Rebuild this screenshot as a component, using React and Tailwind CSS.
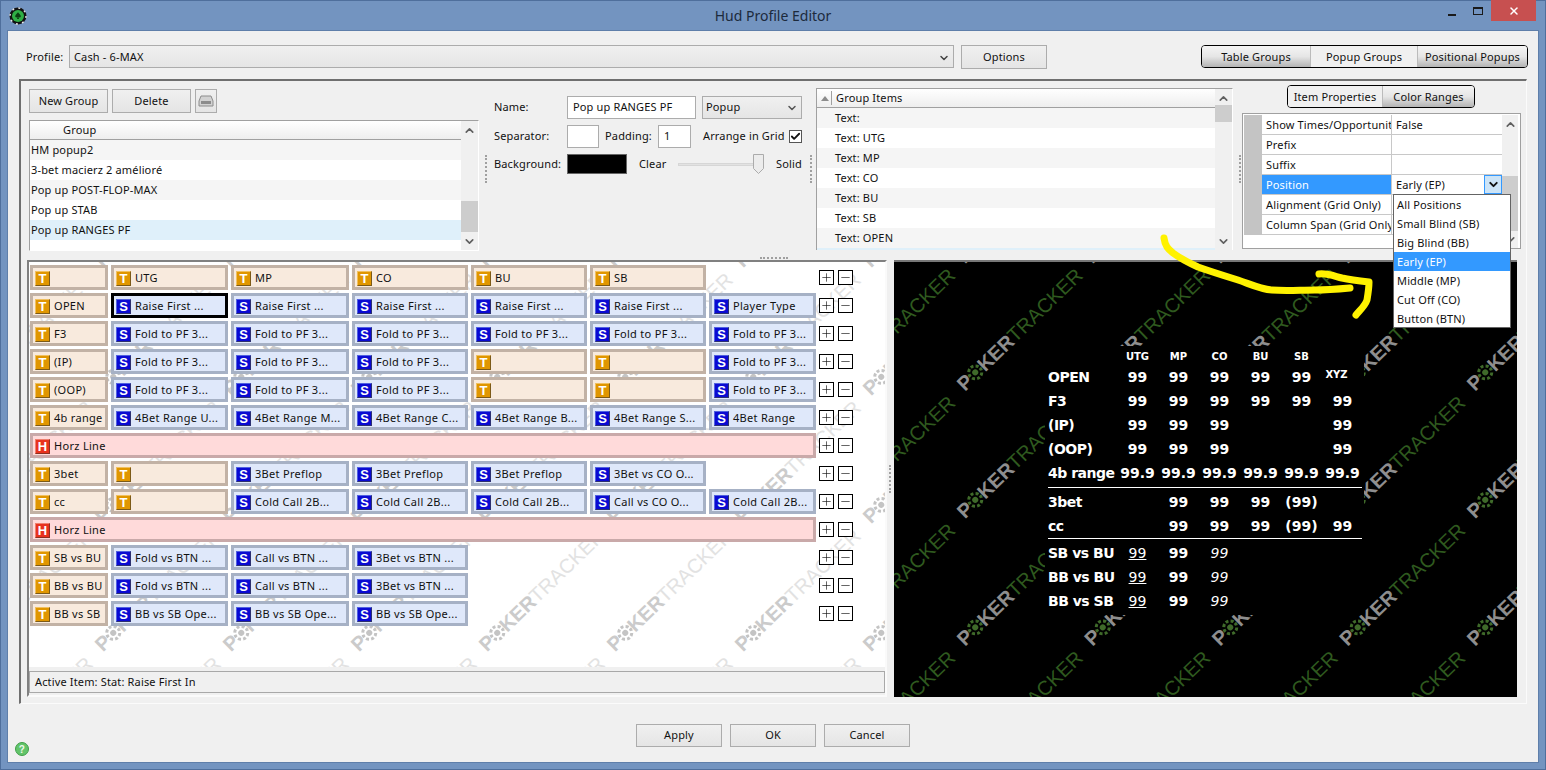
import React from 'react';
import { ChevronUp, ChevronDown, Check, Plus, Minus, X } from 'lucide-react';

const colWidths = ['w-[78px]', 'w-[117px]', 'w-[118px]', 'w-[116px]', 'w-[116px]', 'w-[116px]', 'w-[107px]'];

const fold = 'S:Fold to PF 3...';
const rows = [
  ['T:', 'T:UTG', 'T:MP', 'T:CO', 'T:BU', 'T:SB', null],
  ['T:OPEN', 'A:Raise First ...', 'S:Raise First ...', 'S:Raise First ...', 'S:Raise First ...', 'S:Raise First ...', 'S:Player Type'],
  ['T:F3', fold, fold, fold, fold, fold, fold],
  ['T:(IP)', fold, fold, fold, 'T:', 'T:', fold],
  ['T:(OOP)', fold, fold, fold, 'T:', 'T:', fold],
  ['T:4b range', 'S:4Bet Range U...', 'S:4Bet Range M...', 'S:4Bet Range C...', 'S:4Bet Range B...', 'S:4Bet Range S...', 'S:4Bet Range'],
  'line',
  ['T:3bet', 'T:', 'S:3Bet Preflop', 'S:3Bet Preflop', 'S:3Bet Preflop', 'S:3Bet vs CO O...', null],
  ['T:cc', 'T:', 'S:Cold Call 2B...', 'S:Cold Call 2B...', 'S:Cold Call 2B...', 'S:Call vs CO O...', 'S:Cold Call 2B...'],
  'line',
  ['T:SB vs BU', 'S:Fold vs BTN ...', 'S:Call vs BTN ...', 'S:3Bet vs BTN ...', null, null, null],
  ['T:BB vs BU', 'S:Fold vs BTN ...', 'S:Call vs BTN ...', 'S:3Bet vs BTN ...', null, null, null],
  ['T:BB vs SB', 'S:BB vs SB Ope...', 'S:BB vs SB Ope...', 'S:BB vs SB Ope...', null, null, null],
];

const hudRows = [
  ['OPEN', '99', '99', '99', '99', '99', 'XYZ'],
  ['F3', '99', '99', '99', '99', '99', '99'],
  ['(IP)', '99', '99', '99', '', '', '99'],
  ['(OOP)', '99', '99', '99', '', '', '99'],
  ['4b range', '99.9', '99.9', '99.9', '99.9', '99.9', '99.9'],
];

const groups = ['HM popup2', '3-bet macierz 2 amélioré', 'Pop up POST-FLOP-MAX', 'Pop up STAB', 'Pop up RANGES PF'];
const groupItems = ['Text:', 'Text: UTG', 'Text: MP', 'Text: CO', 'Text: BU', 'Text: SB', 'Text: OPEN'];
const positions = ['All Positions', 'Small Blind (SB)', 'Big Blind (BB)', 'Early (EP)', 'Middle (MP)', 'Cut Off (CO)', 'Button (BTN)'];
const props = [
  ['Show Times/Opportunities', 'False'],
  ['Prefix', ''],
  ['Suffix', ''],
  ['Position', 'Early (EP)'],
  ['Alignment (Grid Only)', ''],
  ['Column Span (Grid Only)', ''],
];

const btn = 'flex items-center justify-center border border-[#acacac] bg-gradient-to-b from-[#f0f0f0] to-[#e5e5e5]';
const darkTab = 'flex items-center justify-center pt-[2px] bg-gradient-to-b from-[#f4f4f4] via-[#e6e6e6] to-[#b4b4b4]';
const hudRow = 'grid grid-cols-[69px_repeat(6,41px)] h-[24px] pt-[2px] items-center text-center';

function Watermark({ startX, startY, pitch, nx, ny, poker, tracker, chip }) {
  const items = [];
  for (let j = 0; j < ny; j++) {
    for (let i = 0; i < nx; i++) {
      items.push(
        <g key={`${i}-${j}`} transform={`translate(${startX + i * pitch} ${startY + j * pitch}) rotate(-44)`}>
          <text x="0" y="0" fontSize="20" fontWeight="700" fill={poker}>P</text>
          <circle cx="21" cy="-7" r="6.5" fill="none" stroke={chip} strokeWidth="3" strokeDasharray="3 2" />
          <circle cx="21" cy="-7" r="3" fill={chip} />
          <text x="28" y="0" fontSize="20" fontWeight="700" fill={poker}>KER</text>
          <text x="70" y="0" fontSize="20" fill={tracker}>TRACKER</text>
        </g>
      );
    }
  }
  return (
    <svg className="absolute inset-0 w-full h-full tracking-normal font-[Liberation_Sans,sans-serif]">
      {items}
    </svg>
  );
}

function ItemIcon({ kind }) {
  const colors = {
    T: 'bg-[#e09600] border-t-[#f0c060] border-l-[#f0c060] border-r-[#7c5a18] border-b-[#7c5a18]',
    S: 'bg-[#0a0ad2] border-t-[#5060e0] border-l-[#5060e0] border-r-[#2c3070] border-b-[#2c3070]',
    H: 'bg-[#e8321e] border-t-[#f08070] border-l-[#f08070] border-r-[#8c3020] border-b-[#8c3020]',
  };
  return (
    <span className={`w-[15px] h-[15px] shrink-0 border flex items-center justify-center text-white font-bold text-[13px] leading-none tracking-normal font-[Liberation_Sans,sans-serif] ${colors[kind]}`}>
      {kind}
    </span>
  );
}

function StatCell({ spec, width }) {
  if (!spec) return <div className={`${width} shrink-0`} />;
  const kind = spec[0];
  const label = spec.slice(2);
  const style = {
    T: 'bg-[#f8eadd] border-[#c2b2a5]',
    S: 'bg-[#dfe8fa] border-[#a6b1c5]',
    A: 'bg-[#dfe8fa] border-black',
  };
  return (
    <div className={`${width} shrink-0 h-[25px] border-[3px] pl-[2px] pt-[2px] flex items-center gap-[4px] whitespace-nowrap overflow-hidden tracking-[0.3px] ${style[kind]}`}>
      <ItemIcon kind={kind === 'A' ? 'S' : kind} />
      <span>{label}</span>
    </div>
  );
}

function RowControls() {
  return (
    <div className="flex items-center gap-[4px]">
      <span className="w-[15px] h-[15px] border border-black bg-white flex items-center justify-center"><Plus size={13} strokeWidth={1.2} /></span>
      <span className="w-[15px] h-[15px] border border-black bg-white flex items-center justify-center"><Minus size={13} strokeWidth={1.2} /></span>
    </div>
  );
}

function Scrollbar({ thumb, width = 'w-[17px]' }) {
  return (
    <div className={`${width} shrink-0 bg-[#f0f0f0] flex flex-col items-center`}>
      <ChevronUp size={13} strokeWidth={3} className="text-[#606060] mt-[3px] shrink-0" />
      <div className="flex-1 w-full">
        <div className={`bg-[#cdcdcd] w-full ${thumb}`} />
      </div>
      <ChevronDown size={13} strokeWidth={3} className="text-[#606060] mb-[2px] shrink-0" />
    </div>
  );
}

function VGrip({ className }) {
  return <div className={`w-[2px] h-[28px] shrink-0 border-l-2 border-dotted border-[#a0a0a0] ${className}`} />;
}

function Chip() {
  return (
    <svg width="18" height="18" viewBox="0 0 18 18">
      <circle cx="9" cy="9" r="8.5" fill="#111" />
      <circle cx="9" cy="9" r="8" fill="none" stroke="#e8e8e8" strokeWidth="1.4" strokeDasharray="2 4.3" />
      <circle cx="9" cy="9" r="6" fill="#2fae45" />
      <path d="M9 5.2c1 1.5 2.8 2.5 2.8 4 0 1.2-1.5 1.6-2.3.7l.5 2h-2l.5-2c-.8.9-2.3.5-2.3-.7 0-1.5 1.8-2.5 2.8-4z" fill="#0b3d12" />
    </svg>
  );
}

function Hud() {
  return (
    <div className="relative ml-[151px] mt-[84px] w-[319px] h-[269px] bg-black text-white font-bold text-[14px] tracking-normal pl-[3px] font-[DejaVu_Sans,sans-serif]">
      <div className="grid grid-cols-[69px_repeat(6,41px)] h-[18px] pt-[2px] items-center text-[10px] text-center">
        <span />
        <span>UTG</span><span>MP</span><span>CO</span><span>BU</span><span>SB</span><span />
      </div>
      {hudRows.map((row) => (
        <div key={row[0]} className={hudRow}>
          <span className="text-left tracking-[-0.5px] whitespace-nowrap">{row[0]}</span>
          {row.slice(1).map((v, i) => (
            <span key={i} className={v === 'XYZ' ? 'text-[10px] -mt-[6px] -translate-x-[6px]' : ''}>{v}</span>
          ))}
        </div>
      ))}
      <div className="h-px bg-white w-[314px] mt-[3px] mb-px" />
      {[
        ['3bet', '', '99', '99', '99', '(99)', ''],
        ['cc', '', '99', '99', '99', '(99)', '99'],
      ].map((row) => (
        <div key={row[0]} className={hudRow}>
          <span className="text-left tracking-[-0.5px]">{row[0]}</span>
          {row.slice(1).map((v, i) => <span key={i}>{v}</span>)}
        </div>
      ))}
      <div className="h-px bg-white w-[314px] mt-px mb-px" />
      {['SB vs BU', 'BB vs BU', 'BB vs SB'].map((label) => (
        <div key={label} className={hudRow}>
          <span className="text-left tracking-[-0.5px] whitespace-nowrap">{label}</span>
          <span className="font-normal underline">99</span>
          <span>99</span>
          <span className="font-normal italic">99</span>
        </div>
      ))}
    </div>
  );
}

export default function App() {
  return (
    <div className="relative w-[1546px] h-[770px] overflow-hidden bg-[#7394c0] shadow-[inset_0_0_0_1px_#4f6f9c] text-[11px] tracking-[0.15px] text-[#111] font-[Noto_Sans,sans-serif]">
      {/* title bar */}
      <div className="relative h-[31px] flex items-center justify-center text-[14px] tracking-normal text-[#1c2a3c]">
        <div className="absolute left-[9px] top-[7px]"><Chip /></div>
        Hud Profile Editor
        <div className="absolute right-[10px] top-0 flex items-start">
          <div className="w-[26px] h-[21px] flex items-end justify-center pb-[5px]"><span className="w-[8px] h-[2px] bg-[#1a1a1a]" /></div>
          <div className="w-[26px] h-[21px] flex items-center justify-center"><span className="w-[10px] h-[8px] border border-t-2 border-[#1a1a1a]" /></div>
          <div className="w-[45px] h-[21px] bg-[#c75050] flex items-center justify-center"><X size={12} strokeWidth={3} className="text-white" /></div>
        </div>
      </div>

      {/* window body */}
      <div className="mx-[8px] h-[731px] bg-[#f0f0f0] shadow-[0_0_0_1px_#5f7faa] flex flex-col">
        {/* profile row */}
        <div className="h-[48px] shrink-0 pt-[14px] pl-[18px] pr-[10px] flex items-start">
          <span className="w-[43px] h-[23px] pt-[2px] flex items-center">Profile:</span>
          <div className={`${btn} w-[885px] h-[23px] !justify-between pl-[4px] pr-[3px] pt-[2px]`}>
            <span>Cash - 6-MAX</span>
            <ChevronDown size={12} strokeWidth={3} className="text-[#444]" />
          </div>
          <div className={`${btn} w-[86px] h-[24px] ml-[7px]`}>Options</div>
          <div className="ml-[154px] w-[327px] h-[23px] flex border border-black rounded-[4px] overflow-hidden">
            <div className={`${darkTab} w-[108px]`}>Table Groups</div>
            <div className="w-[108px] flex items-center justify-center pt-[2px] bg-[#f0f0f0] border-x border-[#bbb]">Popup Groups</div>
            <div className={`${darkTab} flex-1 whitespace-nowrap`}>Positional Popups</div>
          </div>
        </div>

        {/* main panel */}
        <div className="mx-[11px] h-[625px] shrink-0 border-t-2 border-l-2 border-[#6f6f6f] border-r border-b border-r-[#fbfbfb] border-b-[#fbfbfb] flex flex-col">
          {/* top section */}
          <div className="h-[174px] shrink-0 flex items-start">
            <div className="ml-[8px] mt-[8px] w-[450px] shrink-0">
              <div className="flex gap-[4px] h-[24px]">
                <div className={`${btn} w-[79px]`}>New Group</div>
                <div className={`${btn} w-[79px]`}>Delete</div>
                <div className={`${btn} w-[22px]`}>
                  <svg width="16" height="12" viewBox="0 0 16 12">
                    <path d="M3 1h10l2 5v5H1V6z" fill="#d2d2d2" stroke="#8c8c8c" />
                    <rect x="3" y="6" width="10" height="3" fill="#8c8c8c" />
                  </svg>
                </div>
              </div>
              <div className="mt-[7px] h-[131px] border-t border-l border-[#a0a0a0] border-r border-b border-r-white border-b-white flex bg-white">
                <div className="flex-1 min-w-0">
                  <div className="h-[19px] pl-[33px] flex items-center border-b border-[#a0a0a0] bg-gradient-to-b from-white to-[#eeeeee]">Group</div>
                  {groups.map((g, i) => (
                    <div key={g} className={`h-[20px] pl-[1px] flex items-center ${i === 4 ? 'bg-[#dff0fa]' : i % 2 === 0 ? 'bg-[#f5f5f5]' : 'bg-white'}`}>{g}</div>
                  ))}
                </div>
                <Scrollbar thumb="h-[31px] mt-[64px]" />
              </div>
            </div>

            <VGrip className="ml-[6px] mt-[74px]" />

            <div className="ml-[7px] mt-[15px] w-[308px] shrink-0">
              <div className="flex h-[23px] items-center">
                <span className="w-[73px]">Name:</span>
                <div className="w-[129px] h-[23px] border border-[#acacac] bg-white flex items-center pl-[5px] whitespace-nowrap">Pop up RANGES PF</div>
                <div className={`${btn} w-[100px] h-[23px] ml-[6px] !justify-between pl-[3px] pr-[3px]`}>
                  <span>Popup</span>
                  <ChevronDown size={12} strokeWidth={3} className="text-[#555]" />
                </div>
              </div>
              <div className="flex h-[23px] items-center mt-[6px]">
                <span className="w-[73px]">Separator:</span>
                <div className="w-[32px] h-[23px] border border-[#acacac] bg-white" />
                <span className="ml-[6px] w-[53px]">Padding:</span>
                <div className="w-[33px] h-[23px] border border-[#acacac] bg-white flex items-center pl-[5px]">1</div>
                <span className="ml-[12px] whitespace-nowrap">Arrange in Grid</span>
                <span className="ml-auto w-[13px] h-[13px] border border-[#555] bg-white flex items-center justify-center"><Check size={11} strokeWidth={4} /></span>
              </div>
              <div className="flex h-[20px] items-center mt-[6px]">
                <span className="w-[73px]">Background:</span>
                <div className="w-[60px] h-[20px] border border-[#666] bg-black" />
                <span className="ml-[12px] w-[39px]">Clear</span>
                <div className="w-[86px] h-[20px] flex items-center relative">
                  <div className="w-full h-[3px] bg-[#e2e2e2] border border-[#d6d6d6]" />
                  <svg className="absolute right-0 top-0" width="11" height="20" viewBox="0 0 11 20">
                    <path d="M.5.5h10v14l-5 5-5-5z" fill="#ececec" stroke="#ababab" />
                  </svg>
                </div>
                <span className="ml-[12px]">Solid</span>
              </div>
            </div>

            <VGrip className="ml-[8px] mt-[74px]" />

            <div className="ml-[4px] mt-[7px] w-[417px] h-[162px] shrink-0 border-t border-l border-[#a0a0a0] border-r border-r-white flex bg-white">
              <div className="flex-1 min-w-0">
                <div className="h-[19px] flex items-center border-b border-[#a0a0a0] bg-gradient-to-b from-white to-[#eeeeee]">
                  <svg className="ml-[4px]" width="8" height="5" viewBox="0 0 8 5"><path d="M4 0l4 5H0z" fill="#8c8c8c" /></svg>
                  <span className="ml-[2px] mr-[4px] w-px h-[14px] bg-[#a0a0a0]" />
                  Group Items
                </div>
                {groupItems.map((g, i) => (
                  <div key={g} className={`h-[20px] pl-[18px] flex items-center ${i % 2 === 0 ? 'bg-[#f5f5f5]' : 'bg-white'}`}>{g}</div>
                ))}
                <div className="h-[2px] bg-[#dff0fa]" />
              </div>
              <Scrollbar thumb="h-[17px] mt-0" />
            </div>

            <VGrip className="ml-[6px] mt-[74px]" />

            <div className="ml-[1px] mt-[4px] w-[279px] shrink-0">
              <div className="ml-[45px] w-[188px] h-[23px] flex border border-black rounded-[4px] overflow-hidden">
                <div className="w-[94px] flex items-center justify-center pt-[2px] bg-[#f0f0f0]">Item Properties</div>
                <div className={`${darkTab} flex-1 border-l border-[#bbb]`}>Color Ranges</div>
              </div>
              <div className="relative mt-[5px] h-[136px] border border-[#a0a0a0] bg-white flex pt-px pl-px">
                <div className="w-[18px] h-[120px] shrink-0 bg-[#c4c4c4]" />
                <div className="w-[240px] shrink-0 self-start">
                  {props.map(([name, value]) => (
                    <div key={name} className="flex h-[20px] border-b border-[#c8c8c8]">
                      <div className={`w-[130px] shrink-0 px-[4px] pt-[2px] flex items-center border-r border-[#c8c8c8] whitespace-nowrap overflow-hidden ${name === 'Position' ? 'bg-[#3399ff] text-white' : ''}`}>{name}</div>
                      <div className="flex-1 pl-[4px] flex items-center justify-between">
                        <span className="pt-[2px]">{value}</span>
                        {name === 'Position' && (
                          <span className="w-[18px] h-[19px] bg-[#cce4f7] border border-[#3399ff] flex items-center justify-center"><ChevronDown size={13} strokeWidth={3.5} /></span>
                        )}
                      </div>
                    </div>
                  ))}
                </div>
                <Scrollbar thumb="h-[55px] mt-[45px]" width="w-[16px]" />
                {/* open dropdown of the Position row */}
                <div className="absolute left-[150px] top-[80px] w-[118px] h-[134px] z-20 bg-white border border-[#646464]">
                  {positions.map((p) => (
                    <div key={p} className={`h-[19px] pl-[3px] pt-[2px] flex items-center ${p === 'Early (EP)' ? 'bg-[#3399ff] text-white' : ''}`}>{p}</div>
                  ))}
                </div>
              </div>
            </div>
          </div>

          {/* splitter */}
          <div className="h-[5px] shrink-0 flex items-center justify-center">
            <span className="w-[28px] border-t-2 border-dotted border-[#a0a0a0]" />
          </div>

          {/* bottom section */}
          <div className="h-[437px] shrink-0 flex items-start">
            <div className="ml-[6px] w-[860px] h-[437px] shrink-0 border-t-2 border-l-2 border-[#808080] border-r-2 border-b-2 border-r-[#fafafa] border-b-[#fafafa] flex flex-col">
              <div className="relative h-[405px] shrink-0 bg-white overflow-hidden">
                <Watermark startX={-54} startY={6.5} pitch={128} nx={9} ny={5} poker="#cbcbcb" tracker="#e2e2e2" chip="#c4c4c4" />
                <div className="relative pl-px pt-[3px] flex flex-col gap-[3px]">
                  {rows.map((row, r) => (
                    <div key={r} className="flex gap-[3px] h-[25px] items-center">
                      {row === 'line' ? (
                        <div className="w-[786px] h-[25px] border-[3px] border-[#c9a9a9] bg-[#ffdada] pl-[2px] pt-[2px] flex items-center gap-[4px] tracking-[0.3px]">
                          <ItemIcon kind="H" />
                          <span>Horz Line</span>
                        </div>
                      ) : (
                        row.map((spec, c) => <StatCell key={c} spec={spec} width={colWidths[c]} />)
                      )}
                      <RowControls />
                    </div>
                  ))}
                </div>
              </div>
              <div className="mt-[4px] h-[22px] border border-[#a8a8a8] bg-[#f0f0f0] flex items-center pl-[5px]">Active Item: Stat: Raise First In</div>
            </div>
            <VGrip className="ml-[2px] mt-[205px]" />
            <div className="relative ml-[3px] w-[623px] h-[437px] shrink-0 bg-black border-t-2 border-[#777] overflow-hidden flex items-start">
              <Watermark startX={-56.5} startY={2.5} pitch={127.5} nx={7} ny={5} poker="#8e8e8e" tracker="#2f5a1f" chip="#3f6a2a" />
              <Hud />
            </div>
          </div>
        </div>

        {/* footer */}
        <div className="flex-1 grid grid-cols-[1fr_auto_1fr] pt-[20px]">
          <div className="pl-[7px] pt-[18px]">
            <svg width="14" height="14" viewBox="0 0 14 14">
              <circle cx="7" cy="7" r="6.5" fill="#62c46a" stroke="#3f9e48" />
              <text x="7" y="10.5" textAnchor="middle" fontSize="10" fontWeight="700" fill="#eef8ee" fontFamily="Liberation Sans, sans-serif">?</text>
            </svg>
          </div>
          <div className="flex gap-[8px] h-[23px]">
            <div className={`${btn} w-[86px]`}>Apply</div>
            <div className={`${btn} w-[86px]`}>OK</div>
            <div className={`${btn} w-[86px]`}>Cancel</div>
          </div>
          <div />
        </div>
      </div>

      {/* hand drawn yellow arrow on top of the shot */}
      <svg className="absolute inset-0 w-full h-full z-10 pointer-events-none" viewBox="0 0 1546 770">
        <path
          d="M1164 238c1 8 4 11 9 15 8 6 16 10 25 14 14 5 27 9 40 13 12 4 22 9 34 10 14 1 28 0 43 0 12 0 24-1 35-2M1319 274c8-1 15 2 23 4 9 2 18 3 27 4 0 6-1 12-2 18-2 6-7 10-11 15"
          fill="none"
          stroke="#fff200"
          strokeWidth="7"
          strokeLinecap="round"
          strokeLinejoin="round"
        />
      </svg>
    </div>
  );
}
